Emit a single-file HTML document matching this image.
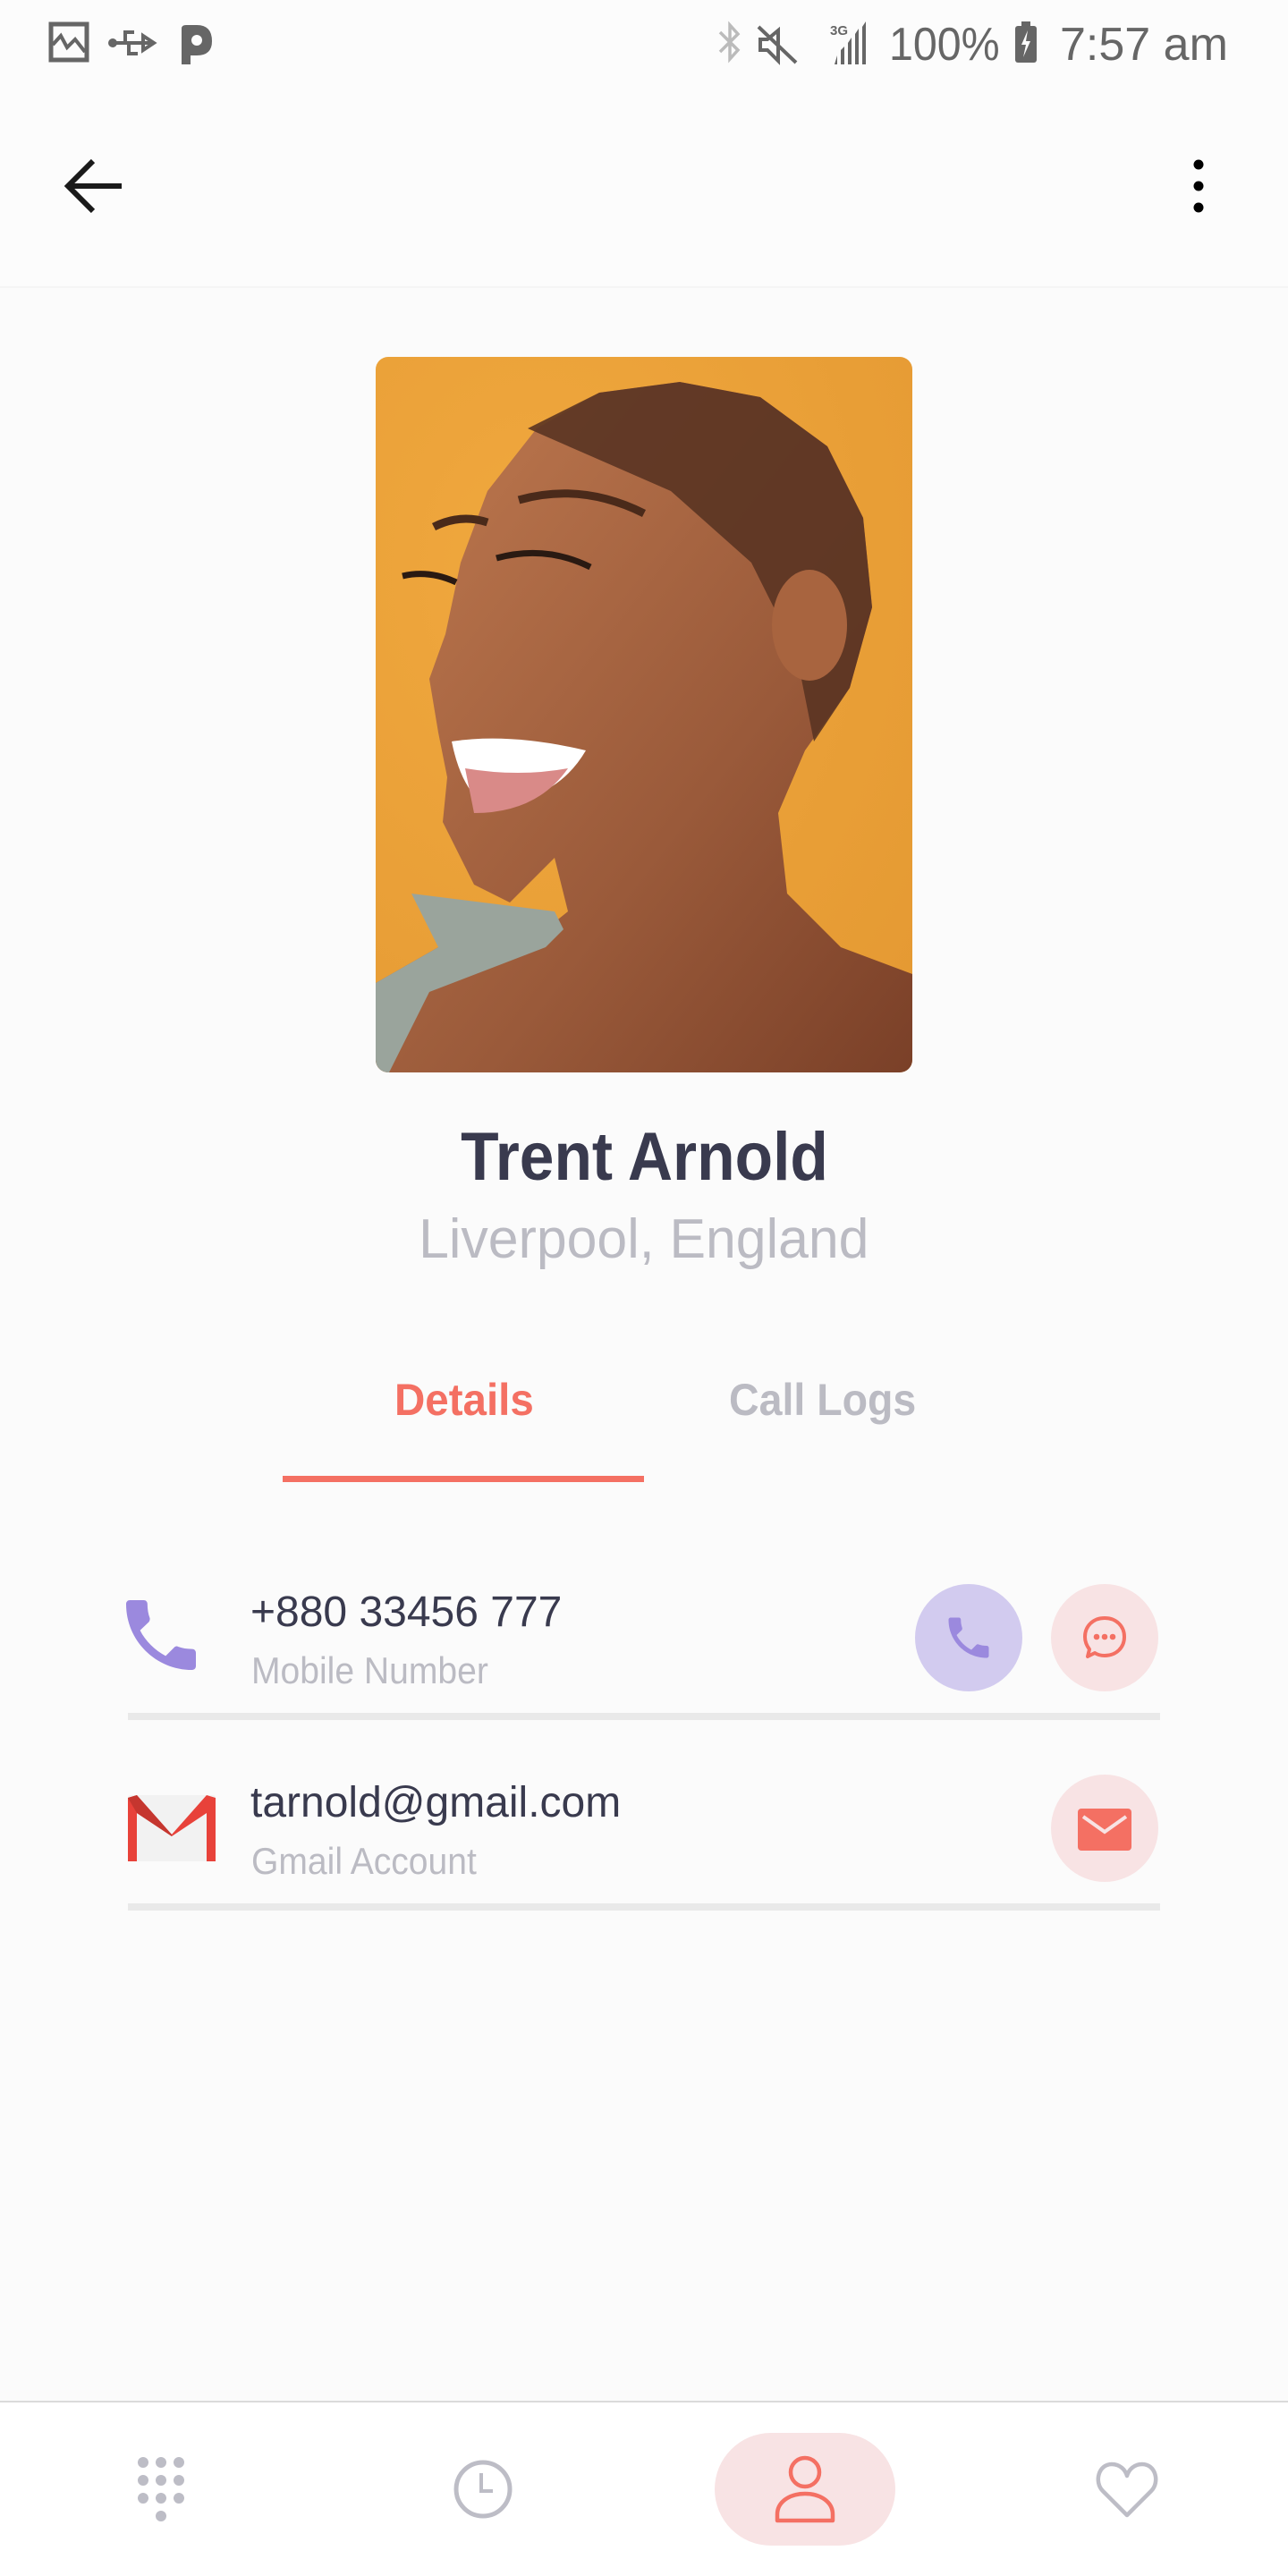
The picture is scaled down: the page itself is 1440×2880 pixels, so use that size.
<!DOCTYPE html>
<html><head><meta charset="utf-8">
<style>
*{margin:0;padding:0;box-sizing:border-box}
body{width:1440px;height:2880px;background:#fbfbfb;position:relative;overflow:hidden;font-family:"Liberation Sans",sans-serif}
.a{position:absolute;white-space:nowrap;line-height:1}
</style></head><body>
<div class="a" style="left:0;top:0;width:1440px;height:320px;background:#fcfcfc"></div>
<div class="a" style="left:0;top:320px;width:1440px;height:2px;background:#f5f5f5"></div>

<!-- status bar -->
<svg class="a" style="left:50px;top:20px" width="200" height="56" viewBox="0 0 200 56">
 <rect x="7" y="7" width="40" height="40" fill="none" stroke="#666" stroke-width="5"/>
 <path d="M9 30 L18 20 L25 33 L34 24 L45 38" fill="none" stroke="#666" stroke-width="4"/>
 <path d="M76 28 H120 M110 20 L122 28 L110 36 Z M90 28 V16 H100 M94 28 V40 H104" fill="none" stroke="#666" stroke-width="4"/>
 <circle cx="76" cy="28" r="5" fill="#666"/>
 <path d="M153 52 V12 Q153 8 158 8 H170 Q187 8 187 26 Q187 42 170 42 H163 V52 Z" fill="#666"/>
 <circle cx="170" cy="25" r="6" fill="#fcfcfc"/>
</svg>
<svg class="a" style="left:800px;top:22px" width="185" height="54" viewBox="0 0 185 54">
 <path d="M5 14 L25 34 L16 44 V6 L25 16 L5 36" fill="none" stroke="#bbb" stroke-width="3.5"/>
 <path d="M70 12 V46 L58 34 H50 V22 H58 Z" fill="none" stroke="#666" stroke-width="4"/>
 <path d="M48 8 L90 48" stroke="#666" stroke-width="4"/>
 <text x="128" y="17" font-size="15" font-weight="bold" fill="#666" font-family="Liberation Sans">3G</text>
 <path d="M133 50 L136 40 V50 Z M140 50 V34 L144 30 V50 Z M148 50 V26 L152 20 V50 Z M156 50 V16 L160 10 V50 Z M164 50 V8 L168 2 V50 Z" fill="#666"/>
</svg>
<div class="a" style="left:994px;top:24px;font-size:52px;color:#666;transform:scaleX(.93);transform-origin:left">100%</div>
<svg class="a" style="left:1134px;top:24px" width="26" height="46" viewBox="0 0 26 46"><rect x="8" y="0" width="10" height="6" fill="#666"/><rect x="1" y="5" width="24" height="41" rx="3" fill="#666"/><path d="M15 10 L8 26 H13 L10 40 L18 22 H13 Z" fill="#fcfcfc"/></svg>
<div class="a" style="left:1185px;top:24px;font-size:52px;color:#666">7:57 am</div>

<!-- app bar -->
<svg class="a" style="left:68px;top:172px" width="72" height="72" viewBox="0 0 72 72">
 <path d="M68 36 H10 M36 8 L8 36 L36 64" fill="none" stroke="#1a1a1a" stroke-width="6"/>
</svg>
<svg class="a" style="left:1326px;top:172px" width="28" height="72" viewBox="0 0 28 72">
 <circle cx="14" cy="12" r="5.5" fill="#000"/><circle cx="14" cy="36" r="5.5" fill="#000"/><circle cx="14" cy="60" r="5.5" fill="#000"/>
</svg>

<!-- photo -->
<svg class="a" style="left:420px;top:399px" width="600" height="800" viewBox="0 0 600 800">
 <defs>
  <clipPath id="c"><rect width="600" height="800" rx="14"/></clipPath>
  <radialGradient id="bg" cx="0.3" cy="0.3" r="0.9"><stop offset="0" stop-color="#f0a83e"/><stop offset="1" stop-color="#e59a33"/></radialGradient>
  <linearGradient id="sk" x1="0" y1="0" x2="1" y2="1"><stop offset="0" stop-color="#c07a50"/><stop offset="0.6" stop-color="#9a5a3a"/><stop offset="1" stop-color="#7a4028"/></linearGradient>
 </defs>
 <g clip-path="url(#c)">
  <rect width="600" height="800" fill="url(#bg)"/>
  <path d="M0 700 L70 660 L190 640 L215 620 L200 560 L150 610 L110 590 L75 520 L80 470 L70 420 L60 360 L78 310 L95 230 L125 150 L180 80 L250 40 L340 28 L430 45 L505 100 L545 180 L555 280 L530 370 L480 440 L450 510 L460 600 L520 660 L600 690 L600 800 L0 800 Z" fill="url(#sk)"/>
  <path d="M170 80 L250 40 L340 28 L430 45 L505 100 L545 180 L555 280 L530 370 L490 430 L470 330 L420 230 L330 150 Z" fill="#5a3422" opacity="0.9"/>
  <ellipse cx="485" cy="300" rx="42" ry="62" fill="#a8643f"/>
  <path d="M85 430 Q150 420 235 440 Q200 500 120 500 Q95 480 85 430 Z" fill="#fff"/>
  <path d="M100 460 Q160 470 215 460 Q180 510 110 510 Z" fill="#d98a88"/>
  <path d="M40 600 L70 660 L0 700 L0 800 L15 800 L60 710 L190 660 L210 640 L200 620 Z" fill="#9aa49c"/>
  <path d="M30 245 Q60 238 90 252 M135 225 Q190 210 240 235" stroke="#2a1a12" stroke-width="7" fill="none"/>
  <path d="M65 190 Q95 175 125 185 M160 160 Q230 140 300 175" stroke="#4a2a1a" stroke-width="9" fill="none"/>
 </g>
</svg>

<!-- name -->
<div class="a" style="left:0;width:1440px;text-align:center;top:1256px;font-size:76px;font-weight:bold;color:#393a4e"><span style="display:inline-block;transform:scaleX(.915)">Trent Arnold</span></div>
<div class="a" style="left:0;width:1440px;text-align:center;top:1355px;font-size:62px;color:#bbbbc3"><span style="display:inline-block;transform:scaleX(.98)">Liverpool, England</span></div>

<!-- tabs -->
<div class="a" style="left:441px;top:1540px;font-size:50px;font-weight:bold;color:#f47063;transform:scaleX(.95);transform-origin:left">Details</div>
<div class="a" style="left:815px;top:1540px;font-size:50px;font-weight:bold;color:#bbbbc3;transform:scaleX(.93);transform-origin:left">Call Logs</div>
<div class="a" style="left:316px;top:1650px;width:404px;height:7px;background:#f47063"></div>

<!-- row 1 -->
<svg class="a" style="left:128px;top:1776px" width="104" height="104" viewBox="0 0 24 24"><path d="M6.6 10.8c1.4 2.8 3.8 5.1 6.6 6.6l2.2-2.2c.3-.3.7-.4 1-.2 1.1.4 2.3.6 3.6.6.6 0 1 .4 1 1V20c0 .6-.4 1-1 1C10.6 21 3 13.4 3 4c0-.6.4-1 1-1h3.5c.6 0 1 .4 1 1 0 1.3.2 2.5.6 3.6.1.3 0 .7-.2 1z" fill="#9b89de"/></svg>
<div class="a" style="left:280px;top:1779px;font-size:48px;color:#393a4e">+880 33456 777</div>
<div class="a" style="left:281px;top:1847px;font-size:42px;color:#bbbbc3;transform:scaleX(.93);transform-origin:left">Mobile Number</div>
<div class="a" style="left:1023px;top:1771px;width:120px;height:120px;border-radius:50%;background:#d2cbef"></div>
<svg class="a" style="left:1053px;top:1801px" width="60" height="60" viewBox="0 0 24 24"><path d="M6.6 10.8c1.4 2.8 3.8 5.1 6.6 6.6l2.2-2.2c.3-.3.7-.4 1-.2 1.1.4 2.3.6 3.6.6.6 0 1 .4 1 1V20c0 .6-.4 1-1 1C10.6 21 3 13.4 3 4c0-.6.4-1 1-1h3.5c.6 0 1 .4 1 1 0 1.3.2 2.5.6 3.6.1.3 0 .7-.2 1z" fill="#9b89de"/></svg>
<div class="a" style="left:1175px;top:1771px;width:120px;height:120px;border-radius:50%;background:#f8e3e4"></div>
<svg class="a" style="left:1205px;top:1801px" width="60" height="60" viewBox="0 0 60 60"><path d="M30 8 C43 8 52 17 52 29 C52 41 43 50 30 50 C26 50 22 49 19 47 L11 51 L13 43 C10 39 8 34 8 29 C8 17 17 8 30 8 Z" fill="none" stroke="#f47063" stroke-width="4" stroke-linejoin="round"/><circle cx="21" cy="29" r="3.3" fill="#f47063"/><circle cx="30" cy="29" r="3.3" fill="#f47063"/><circle cx="39" cy="29" r="3.3" fill="#f47063"/></svg>
<div class="a" style="left:143px;top:1915px;width:1154px;height:8px;background:#e9e9e9"></div>

<!-- row 2 -->
<svg class="a" style="left:143px;top:2007px" width="98" height="74" viewBox="0 0 98 74">
 <rect x="0" y="0" width="98" height="74" rx="3" fill="#f2f2f2"/>
 <path d="M0 3 V74 H10 V20 L49 46 L88 20 V74 H98 V3 L88 0 L49 44 L10 0 Z" fill="#e8423a"/>
 <path d="M0 3 L10 0 L49 44 L49 46 L10 20 Z" fill="#c5362f"/>
</svg>
<div class="a" style="left:280px;top:1992px;font-size:48px;color:#393a4e">tarnold@gmail.com</div>
<div class="a" style="left:281px;top:2060px;font-size:42px;color:#bbbbc3;transform:scaleX(.93);transform-origin:left">Gmail Account</div>
<div class="a" style="left:1175px;top:1984px;width:120px;height:120px;border-radius:50%;background:#f8e3e4"></div>
<svg class="a" style="left:1205px;top:2019px" width="60" height="50" viewBox="0 0 60 50"><rect x="0" y="3" width="60" height="47" rx="4" fill="#f47063"/><path d="M6 12 L30 29 L54 12" fill="none" stroke="#f8e3e4" stroke-width="4"/></svg>
<div class="a" style="left:143px;top:2128px;width:1154px;height:8px;background:#e9e9e9"></div>

<!-- bottom nav -->
<div class="a" style="left:0;top:2684px;width:1440px;height:196px;background:#fff;border-top:2px solid #dadada"></div>
<svg class="a" style="left:150px;top:2743px" width="60" height="80" viewBox="0 0 60 80">
 <g fill="#bdbdc6"><circle cx="10" cy="10" r="6"/><circle cx="30" cy="10" r="6"/><circle cx="50" cy="10" r="6"/><circle cx="10" cy="30" r="6"/><circle cx="30" cy="30" r="6"/><circle cx="50" cy="30" r="6"/><circle cx="10" cy="50" r="6"/><circle cx="30" cy="50" r="6"/><circle cx="50" cy="50" r="6"/><circle cx="30" cy="70" r="6"/></g>
</svg>
<svg class="a" style="left:505px;top:2748px" width="70" height="70" viewBox="0 0 70 70"><circle cx="35" cy="35" r="30" fill="none" stroke="#bdbdc6" stroke-width="5"/><path d="M33 17 V37 H46" fill="none" stroke="#bdbdc6" stroke-width="4"/></svg>
<div class="a" style="left:799px;top:2720px;width:202px;height:126px;border-radius:63px;background:#f8e3e4"></div>
<svg class="a" style="left:865px;top:2745px" width="70" height="76" viewBox="0 0 70 76"><circle cx="35" cy="19" r="16" fill="none" stroke="#f47063" stroke-width="4.5"/><path d="M4 73 V66 C4 52 18 43 35 43 C52 43 66 52 66 66 V73 Z" fill="none" stroke="#f47063" stroke-width="4.5" stroke-linejoin="round"/></svg>
<svg class="a" style="left:1225px;top:2750px" width="70" height="66" viewBox="0 0 70 66"><path d="M35 62 L8 35 C-2 25 3 5 18 5 C27 5 33 11 35 18 C37 11 43 5 52 5 C67 5 72 25 62 35 Z" fill="none" stroke="#bdbdc6" stroke-width="4.5" stroke-linejoin="round"/></svg>
</body></html>
